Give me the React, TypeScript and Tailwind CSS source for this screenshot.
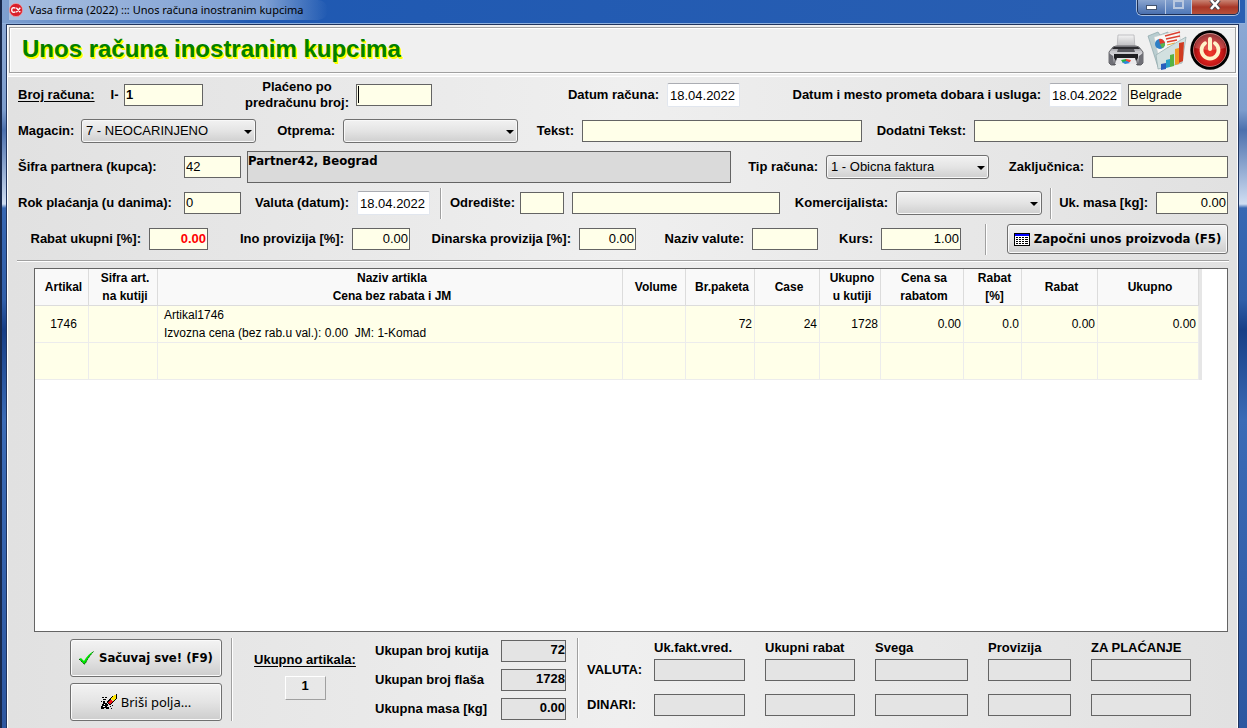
import React from "react";
import { clsx } from "clsx";

const FIELD =
  "block h-[22px] w-full min-w-0 rounded-none border border-[#646464] bg-[#ffffe9] px-[1px] pb-[2px] text-[13px] leading-[18px] outline-none";
const LABEL = "block whitespace-nowrap text-[13px] leading-[16px] font-bold text-black";
const BUTTON =
  "flex items-center justify-center rounded-[3px] border border-[#707070] bg-linear-to-b from-[#f3f3f3] via-[#e4e4e4] to-[#cdcdcd] whitespace-nowrap text-black shadow-[inset_0_0_0_1px_#fafafa]";

type FieldProps = {
  id: string;
  value?: string;
  className?: string;
};

function TextField({ id, value = "", className }: FieldProps) {
  return <input id={id} type="text" defaultValue={value} className={clsx(FIELD, className)} />;
}

function DateField({ id, value = "" }: FieldProps) {
  return (
    <input
      id={id}
      type="text"
      defaultValue={value}
      className="block h-6 w-full min-w-0 rounded-[2px] border border-[#e1e6ee] border-t-[#abadb3] bg-white px-[2px] text-[13px] text-black outline-none"
    />
  );
}

function Combo({ id, value = "" }: FieldProps) {
  return (
    <div className="relative">
      <select
        id={id}
        defaultValue={value}
        className="block h-6 w-full appearance-none rounded-[3px] border border-[#707070] bg-linear-to-b from-[#f2f2f2] via-[#e4e4e4] to-[#cfcfcf] pl-1 text-[13px] text-black shadow-[inset_0_0_0_1px_#f8f8f8] outline-none"
      >
        <option value={value}>{value}</option>
      </select>
      <svg viewBox="0 0 8 4" className="pointer-events-none absolute top-[11px] right-1 h-1 w-2" aria-hidden="true">
        <path d="M0 0h8L4 4z" fill="#000" />
      </svg>
    </div>
  );
}

type LabelProps = { htmlFor: string; start?: boolean; children: React.ReactNode };

function Label({ htmlFor, start = false, children }: LabelProps) {
  return (
    <label htmlFor={htmlFor} className={clsx(LABEL, start ? "text-left" : "pr-2 text-right")}>
      {children}
    </label>
  );
}

function Divider({ className }: { className?: string }) {
  return <div className={clsx("w-[2px] border-r border-l border-r-white border-l-[#a0a0a0]", className)} />;
}

function AppIcon() {
  return (
    <svg viewBox="0 0 14 14" className="h-[14px] w-[14px]" aria-hidden="true">
      <circle cx="7" cy="7" r="6.6" fill="#d9202c" stroke="#f3a0a4" strokeWidth=".7" />
      <path d="M6.400 5.400Q5.900 4.700 4.700 4.700Q2.700 4.900 2.700 7T4.700 9.300Q5.900 9.300 6.400 8.600M7.300 4.700l4 4.600M11.300 4.700l-4 4.600" fill="none" stroke="#fff" strokeWidth="1.3" />
    </svg>
  );
}

function PrinterIcon() {
  return (
    <svg viewBox="0 0 36 32" className="h-8 w-9" aria-hidden="true">
      <defs>
        <linearGradient id="pr-paper" x1="0" y1="0" x2="0" y2="1">
          <stop offset="0" stopColor="#f4f4f4" />
          <stop offset="1" stopColor="#b4b4b8" />
        </linearGradient>
        <linearGradient id="pr-body" x1="0" y1="0" x2="0" y2="1">
          <stop offset="0" stopColor="#8f8f95" />
          <stop offset=".45" stopColor="#dcdce0" />
          <stop offset="1" stopColor="#5c5c62" />
        </linearGradient>
      </defs>
      <path d="M10 1h16l1 13H9z" fill="url(#pr-paper)" stroke="#b4b4b8" strokeWidth=".8" />
      <path d="M5 13l3-1h20l3 1 4 5v11l-2 2h-4l-2-3H9l-2 3H3l-2-2V18z" fill="url(#pr-body)" stroke="#4c4c52" strokeWidth=".8" />
      <path d="M6 13h24l2 2H4z" fill="#2c2c30" />
      <path d="M2 17h32l-3 3H5z" fill="#c9c9cd" />
      <path d="M10 15h16l1 3H9z" fill="#55555b" />
      <path d="M6 20h24v4l-2 3H8l-2-3z" fill="#1f1f22" />
      <path d="M9 24h18l2 6H7z" fill="#e9e9eb" />
      <path d="M1 19l4 3v8l-2 1-2-3zM35 19l-4 3v8l2 1 2-3z" fill="#6f6f76" />
      <path d="M13 26l5-1 1 2-4 2z" fill="#28b33f" />
      <path d="M18 25l5 1-1 2h-4z" fill="#f0483a" />
      <path d="M14 28l5-1 3 2-5 1z" fill="#2a86dc" />
    </svg>
  );
}

function ReportIcon() {
  return (
    <svg viewBox="0 0 40 42" className="h-[42px] w-10" aria-hidden="true">
      <path d="M1 7l10-4 2 3 8-3 5 28-15 7z" fill="#b9cdd0" stroke="#8ba5a9" strokeWidth=".7" />
      <path d="M7 8l25-7 3 24-22 9z" fill="#f8f8f6" stroke="#c8cccc" strokeWidth=".6" />
      <path d="M18 7l15-4M19 10l14-3M20 13l10-2" stroke="#dc4030" strokeWidth="1.4" />
      <path d="M20 16l8-2M20 19l6-2" stroke="#e9a92c" strokeWidth="1" />
      <circle cx="13" cy="15" r="5" fill="#2c7fc5" />
      <path d="M13 15l-1-5a5 5 0 0 1 6 4z" fill="#e23a2b" />
      <path d="M13 15l5-1a5 5 0 0 1-3 5z" fill="#5cb548" />
      <path d="M11 40l-2-14 11-7L39 8l-4 26z" fill="#d2e0e0" stroke="#92a9ac" strokeWidth=".7" />
      <path d="M14 35l5-1v6l-5 1z" fill="#2a5dbd" />
      <path d="M19 31l4-1v8l-4 1z" fill="#279ec5" />
      <path d="M23 26l4-1v12l-4 1z" fill="#58b343" />
      <path d="M28 20l4-1v16l-4 1z" fill="#f09b23" />
      <path d="M32 14l5-1-1 19-4 2z" fill="#d03b22" />
    </svg>
  );
}

function PowerIcon() {
  return (
    <svg viewBox="0 0 40 40" className="h-10 w-10" aria-hidden="true">
      <defs>
        <radialGradient id="pw" cx=".5" cy=".6" r=".6">
          <stop offset="0" stopColor="#f23a2c" />
          <stop offset=".6" stopColor="#c81818" />
          <stop offset="1" stopColor="#6d0606" />
        </radialGradient>
      </defs>
      <circle cx="20" cy="20" r="19.7" fill="#000" />
      <circle cx="20" cy="20" r="16.5" fill="url(#pw)" stroke="#d98583" strokeWidth=".8" />
      <path d="M5 18a15 15 0 0 1 30 0q-15 4-30 0z" fill="#fff" opacity=".2" />
      <path d="M15 13.2a8.5 8.5 0 1 0 10 0" fill="none" stroke="#fff3c9" strokeWidth="3.8" strokeLinecap="round" />
      <path d="M20 9v10" stroke="#fff3c9" strokeWidth="4" strokeLinecap="round" />
    </svg>
  );
}

function GridIcon() {
  return (
    <svg viewBox="0 0 16 13" className="h-[13px] w-4" shapeRendering="crispEdges" aria-hidden="true">
      <path d="M0 0h16v13H0z" fill="#000" />
      <path d="M1 1h14v2H1z" fill="#0000ff" />
      <path d="M1 3h14v9H1z" fill="#fff" />
      <path d="M2 4h2v1H2zM5 4h2v1H5zM8 4h2v1H8zM11 4h3v1h-3zM2 6h2v1H2zM5 6h2v1H5zM8 6h2v1H8zM11 6h3v1h-3zM2 8h2v1H2zM5 8h2v1H5zM8 8h2v1H8zM11 8h3v1h-3zM2 10h2v1H2zM5 10h2v1H5zM8 10h2v1H8zM11 10h3v1h-3z" fill="#000" />
    </svg>
  );
}

function CheckIcon() {
  return (
    <svg viewBox="0 0 16 14" className="h-[14px] w-4" aria-hidden="true">
      <path d="M0 8l2-1 3 3Q9 3 15 0q-5 5-9 13H5z" fill="#00e800" />
      <path d="M0 8l5 5h1Q10 5 15 0" fill="none" stroke="#064d06" strokeWidth=".9" strokeDasharray="2 1" />
    </svg>
  );
}

function EraserIcon() {
  return (
    <svg viewBox="0 0 16 16" className="h-4 w-4" shapeRendering="crispEdges" aria-hidden="true">
      <path d="M6 8l5-6h2l2-2h1v4l-6 7H8z" fill="#000" />
      <path d="M10 4l4-3h1v3l-3 3z" fill="#ffe600" />
      <path d="M7 8l3-3 2 2-3 3H8z" fill="#f01414" />
      <path d="M10 5l2 2" stroke="#d8d8d8" />
      <path d="M1 3h2v1H1zM4 3h2v1H4zM2 5h3v1H2zM0 7h1v1H0zM2 7h2v2h2v1h1v2H6v1h2v2H5v-1H3v1H0v-3h1v-2h1zM9 12h1v1H9zM11 11h1v1h-1zM10 14h1v1h-1z" fill="#000" />
      <path d="M3 10h1v1H3zM2 12h2v1H2z" fill="#fff" />
    </svg>
  );
}

function TitleBar() {
  return (
    <header className="flex h-6 items-start justify-between border-b border-[#8fb0dd] bg-linear-to-r from-[#7fa0d0] via-[#1f59b2] via-20% to-[#2a5fb2] pl-[7px]">
      <div className="flex h-5 items-center gap-[6px] rounded-r-full bg-linear-to-r from-[#c4d3eaa0] via-[#a9c0e2b0] via-80% to-[#ffffff00] pr-6 font-['Noto_Sans','Open_Sans',sans-serif] text-[11px] text-black">
        <AppIcon />
        <span className="whitespace-nowrap">Vasa firma (2022) ::: Unos računa inostranim kupcima</span>
      </div>
      <div className="mr-[6px] flex h-[15px] overflow-hidden rounded-b-[5px] border border-t-0 border-[#1c2f55] shadow-[0_0_0_1px_#a8bfe0]">
        <button type="button" aria-label="Minimize" className="flex w-7 items-center justify-center border-r border-[#b6c8e4] bg-linear-to-b from-[#8aa5cf] to-[#4a6fae]">
          <span className="h-[5px] w-[11px] border border-[#44546e] bg-white" />
        </button>
        <button type="button" aria-label="Maximize" className="flex w-[26px] items-start justify-center border-r border-[#b6c8e4] bg-linear-to-b from-[#84a1ce] to-[#4f78b8]">
          <span className="h-[9px] w-[11px] border-2 border-[#b9c8df]" />
        </button>
        <button type="button" aria-label="Close" className="flex w-[46px] items-start justify-center bg-linear-to-b from-[#c98474] via-[#a93626] to-[#b5503a]">
          <svg viewBox="0 0 12 10" className="h-[10px] w-3" aria-hidden="true">
            <path d="M2 0l8 9M10 0L2 9" stroke="#47464f" strokeWidth="4.4" />
            <path d="M2 0l8 9M10 0L2 9" stroke="#fff" strokeWidth="2.6" />
          </svg>
        </button>
      </div>
    </header>
  );
}

function Banner() {
  return (
    <div className="h-[52px] border-b border-white bg-[#f0f0f0] px-[1px] pt-[2px] pb-[3px]">
      <div className="flex h-full items-center justify-between border border-[#a0a0a0] pr-[5px] pl-3 shadow-[inset_1px_1px_0_#fff,1px_1px_0_#fff]">
        <h1 className="pb-[2px] text-[24px] leading-7 font-bold whitespace-nowrap text-[#008000] [text-shadow:1px_1px_0_#ff0,2px_2px_0_#ff0]">
          Unos računa inostranim kupcima
        </h1>
        <div className="flex items-center gap-[3px]">
          <button type="button" aria-label="Štampa"><PrinterIcon /></button>
          <button type="button" aria-label="Izveštaji"><ReportIcon /></button>
          <button type="button" aria-label="Izlaz"><PowerIcon /></button>
        </div>
      </div>
    </div>
  );
}

function InvoiceForm() {
  return (
    <div className="pr-[9px] pl-[10px]">
      <div className="grid h-9 grid-cols-[106px_79px_153px_76px_1fr_73px_309px_73px_6px_100px] items-center">
        <label htmlFor="broj" className="flex gap-4 text-[13px] leading-4 font-bold whitespace-nowrap">
          <span className="underline underline-offset-2">Broj računa:</span>
          <span>I-</span>
        </label>
        <TextField id="broj" value="1" className="font-bold" />
        <label htmlFor="predracun" className="pr-[7px] text-right text-[13px] leading-4 font-bold whitespace-nowrap">
          <span className="inline-block text-center">
            Plaćeno po
            <br />
            predračunu broj:
          </span>
        </label>
        <div className="relative">
          <TextField id="predracun" />
          <span className="absolute top-[2px] left-[2px] h-[17px] w-px bg-black" />
        </div>
        <Label htmlFor="datum">Datum računa:</Label>
        <DateField id="datum" value="18.04.2022" />
        <Label htmlFor="promet">Datum i mesto prometa dobara i usluga:</Label>
        <DateField id="promet" value="18.04.2022" />
        <span />
        <input aria-label="Mesto prometa" type="text" defaultValue="Belgrade" className={FIELD} />
      </div>

      <div className="grid h-9 grid-cols-[63px_175px_87px_175px_64px_280fr_112px_254fr] items-center">
        <Label htmlFor="magacin" start>Magacin:</Label>
        <Combo id="magacin" value="7 - NEOCARINJENO" />
        <Label htmlFor="otprema">Otprema:</Label>
        <Combo id="otprema" />
        <Label htmlFor="tekst">Tekst:</Label>
        <TextField id="tekst" />
        <Label htmlFor="dodatni">Dodatni Tekst:</Label>
        <TextField id="dodatni" />
      </div>

      <div className="grid h-9 grid-cols-[166px_57px_6px_1fr_95px_163px_103px_136px] items-center">
        <Label htmlFor="sifra" start>Šifra partnera (kupca):</Label>
        <TextField id="sifra" value="42" />
        <span />
        <output className="block h-8 border border-[#646464] bg-[#dadada] font-['DejaVu_Sans_Condensed','DejaVu_Sans',sans-serif] text-[13px] leading-[17px] font-bold">
          Partner42, Beograd
        </output>
        <Label htmlFor="tip">Tip računa:</Label>
        <Combo id="tip" value="1 - Obicna faktura" />
        <Label htmlFor="zakljucnica">Zaključnica:</Label>
        <TextField id="zakljucnica" />
      </div>

      <div className="grid h-9 grid-cols-[166px_57px_116px_73px_20px_70px_44px_8px_1fr_116px_146px_17px_97px_72px] items-center">
        <Label htmlFor="rok" start>Rok plaćanja (u danima):</Label>
        <TextField id="rok" value="0" />
        <Label htmlFor="valuta">Valuta (datum):</Label>
        <DateField id="valuta" value="18.04.2022" />
        <Divider className="ml-[10px] h-[31px]" />
        <Label htmlFor="odrediste" start>Odredište:</Label>
        <TextField id="odrediste" />
        <span />
        <input aria-label="Naziv odredišta" type="text" className={FIELD} />
        <Label htmlFor="komercijalista">Komercijalista:</Label>
        <Combo id="komercijalista" />
        <Divider className="ml-2 h-[31px]" />
        <Label htmlFor="masa">Uk. masa [kg]:</Label>
        <TextField id="masa" value="0.00" className="text-right" />
      </div>

      <div className="grid h-9 grid-cols-[131px_59px_144px_58px_169px_57px_116px_66px_63px_80px_1fr_221px] items-center">
        <Label htmlFor="rabat">Rabat ukupni [%]:</Label>
        <TextField id="rabat" value="0.00" className="text-right font-bold text-[#ff0000]" />
        <Label htmlFor="ino">Ino provizija [%]:</Label>
        <TextField id="ino" value="0.00" className="text-right" />
        <Label htmlFor="dinarska">Dinarska provizija [%]:</Label>
        <TextField id="dinarska" value="0.00" className="text-right" />
        <Label htmlFor="naziv">Naziv valute:</Label>
        <TextField id="naziv" />
        <Label htmlFor="kurs">Kurs:</Label>
        <TextField id="kurs" value="1.00" className="text-right" />
        <Divider className="mr-5 ml-auto h-[31px]" />
        <button type="button" className={clsx(BUTTON, "h-[30px] gap-1 font-['DejaVu_Sans_Condensed','DejaVu_Sans',sans-serif] text-[13px] font-bold")}>
          <GridIcon />
          Započni unos proizvoda (F5)
        </button>
      </div>
    </div>
  );
}

const HEADERS: string[][] = [
  ["Artikal"],
  ["Sifra art.", "na kutiji"],
  ["Naziv artikla", "Cena bez rabata i JM"],
  ["Volume"],
  ["Br.paketa"],
  ["Case"],
  ["Ukupno", "u kutiji"],
  ["Cena sa", "rabatom"],
  ["Rabat", "[%]"],
  ["Rabat"],
  ["Ukupno"],
];
const NUMBERS = ["", "72", "24", "1728", "0.00", "0.0", "0.00", "0.00"];
const CELL = "border-r border-b border-[#ececec] pr-[2px] text-right";

function ItemsTable() {
  return (
    <div className="mr-[9px] ml-[26px] flex-1 border border-[#646464] bg-white pr-[25px]">
      <table className="w-full table-fixed border-separate border-spacing-0 border-r-[3px] border-[#e6e6e6] text-[12px] leading-[18px]">
        <colgroup>
          <col className="w-[54px]" />
          <col className="w-[69px]" />
          <col />
          <col className="w-[63px]" />
          <col className="w-[69px]" />
          <col className="w-[65px]" />
          <col className="w-[61px]" />
          <col className="w-[83px]" />
          <col className="w-[58px]" />
          <col className="w-[76px]" />
          <col className="w-[101px]" />
        </colgroup>
        <thead>
          <tr className="bg-[#f9f9f9]">
            {HEADERS.map((lines, i) => (
              <th key={i} scope="col" className="h-[37px] border-r border-b border-[#dcdcdc] py-0 pr-0 pl-1 font-bold whitespace-nowrap">
                {lines.map((line) => (
                  <div key={line}>{line}</div>
                ))}
              </th>
            ))}
          </tr>
        </thead>
        <tbody className="bg-[#ffffe9]">
          <tr className="h-[37px]">
            <td className="border-r border-b border-[#ececec] pl-1 text-center">1746</td>
            <td className={CELL} />
            <td className="border-r border-b border-[#ececec] pl-[6px]">
              <div>Artikal1746</div>
              <div className="whitespace-pre">{"Izvozna cena (bez rab.u val.): 0.00  JM: 1-Komad"}</div>
            </td>
            {NUMBERS.map((n, i) => (
              <td key={i} className={CELL}>{n}</td>
            ))}
          </tr>
          <tr className="h-[37px]">
            {HEADERS.map((_, i) => (
              <td key={i} className={CELL} />
            ))}
          </tr>
        </tbody>
      </table>
    </div>
  );
}

const COUNTS = [
  { id: "kutija", label: "Ukupan broj kutija", value: "72" },
  { id: "flasa", label: "Ukupan broj flaša", value: "1728" },
  { id: "umasa", label: "Ukupna masa [kg]", value: "0.00" },
];
const TOTALS = ["Uk.fakt.vred.", "Ukupni rabat", "Svega", "Provizija", "ZA PLAĆANJE"];
const READONLY = "block h-[22px] w-full min-w-0 rounded-none border border-[#646464] bg-[#e4e4e4] outline-none";

function Summary() {
  return (
    <footer className="flex h-24 items-start pt-[6px] pr-[46px] pl-[62px] text-[13px] leading-4 font-bold">
      <div className="mt-px flex w-[152px] flex-col gap-[6px]">
        <button type="button" className={clsx(BUTTON, "h-[38px] gap-1 font-['DejaVu_Sans_Condensed','DejaVu_Sans',sans-serif] text-[13px] font-bold")}>
          <CheckIcon />
          Sačuvaj sve! (F9)
        </button>
        <button type="button" className={clsx(BUTTON, "h-[38px] gap-1 font-['Noto_Sans',sans-serif] text-[13px] font-normal")}>
          <EraserIcon />
          Briši polja...
        </button>
      </div>
      <Divider className="ml-[9px] h-[83px]" />
      <div className="ml-5 flex w-[104px] flex-col items-center gap-2 pt-[14px]">
        <span className="whitespace-nowrap underline underline-offset-2">Ukupno artikala:</span>
        <output className="h-6 w-[41px] border border-t-white border-r-[#a0a0a0] border-b-[#a0a0a0] border-l-white text-center leading-[18px]">1</output>
      </div>
      <div className="ml-[18px] grid grid-cols-[126px_65px] items-center gap-y-[7px] pt-[2px]">
        {COUNTS.map((c) => (
          <React.Fragment key={c.id}>
            <label htmlFor={c.id} className="whitespace-nowrap">{c.label}</label>
            <input id={c.id} readOnly value={c.value} className={clsx(READONLY, "pb-[3px] text-right text-[13px] font-bold")} />
          </React.Fragment>
        ))}
      </div>
      <Divider className="ml-[11px] h-20" />
      <table className="ml-2 flex-1 table-fixed border-separate border-spacing-0 text-left">
        <colgroup>
          <col className="w-[67px]" />
          <col className="w-[111px]" />
          <col className="w-[110px]" />
          <col className="w-[113px]" />
          <col className="w-[103px]" />
          <col className="w-[100px]" />
        </colgroup>
        <thead>
          <tr className="h-[21px] align-top">
            <td />
            {TOTALS.map((t) => (
              <th key={t} scope="col" className="px-0 pt-[2px] pb-0 whitespace-nowrap">{t}</th>
            ))}
          </tr>
        </thead>
        <tbody>
          {["VALUTA:", "DINARI:"].map((row) => (
            <tr key={row} className="h-[35px] align-top">
              <th scope="row" className="pt-[3px] whitespace-nowrap">{row}</th>
              {TOTALS.map((t, i) => (
                <td key={t} className={clsx("p-0", i < 4 && "pr-5")}>
                  <input readOnly aria-label={`${row} ${t}`} className={READONLY} />
                </td>
              ))}
            </tr>
          ))}
        </tbody>
      </table>
    </footer>
  );
}

export default function App() {
  return (
    <div className="flex min-h-screen flex-col overflow-hidden border-l-2 border-[#18294c] bg-[linear-gradient(180deg,#8fabd6_0px,#7d9dcd_110px,#4c70ad_130px,#d0def2_204px,#3868b3_208px,#315fa9_300px,#173e86_330px,#3b6bb6_420px,#2d57a0_100%)] pr-[2px] font-['Liberation_Sans',Arial,sans-serif] text-black">
      <TitleBar />
      <div className="ml-1 mr-[6px] flex flex-1 flex-col border-x border-t border-x-[#20345d] border-t-[#20345d]">
        <main className="flex flex-1 flex-col border-x border-white bg-linear-to-r from-[#e1e1e1] via-[#efefef] to-[#e1e1e1]">
          <Banner />
          <InvoiceForm />
          <div className="mt-[3px] mr-2 mb-[6px] ml-[9px] h-[2px] border-t border-b border-t-[#a0a0a0] border-b-white" />
          <ItemsTable />
          <Summary />
        </main>
      </div>
    </div>
  );
}
